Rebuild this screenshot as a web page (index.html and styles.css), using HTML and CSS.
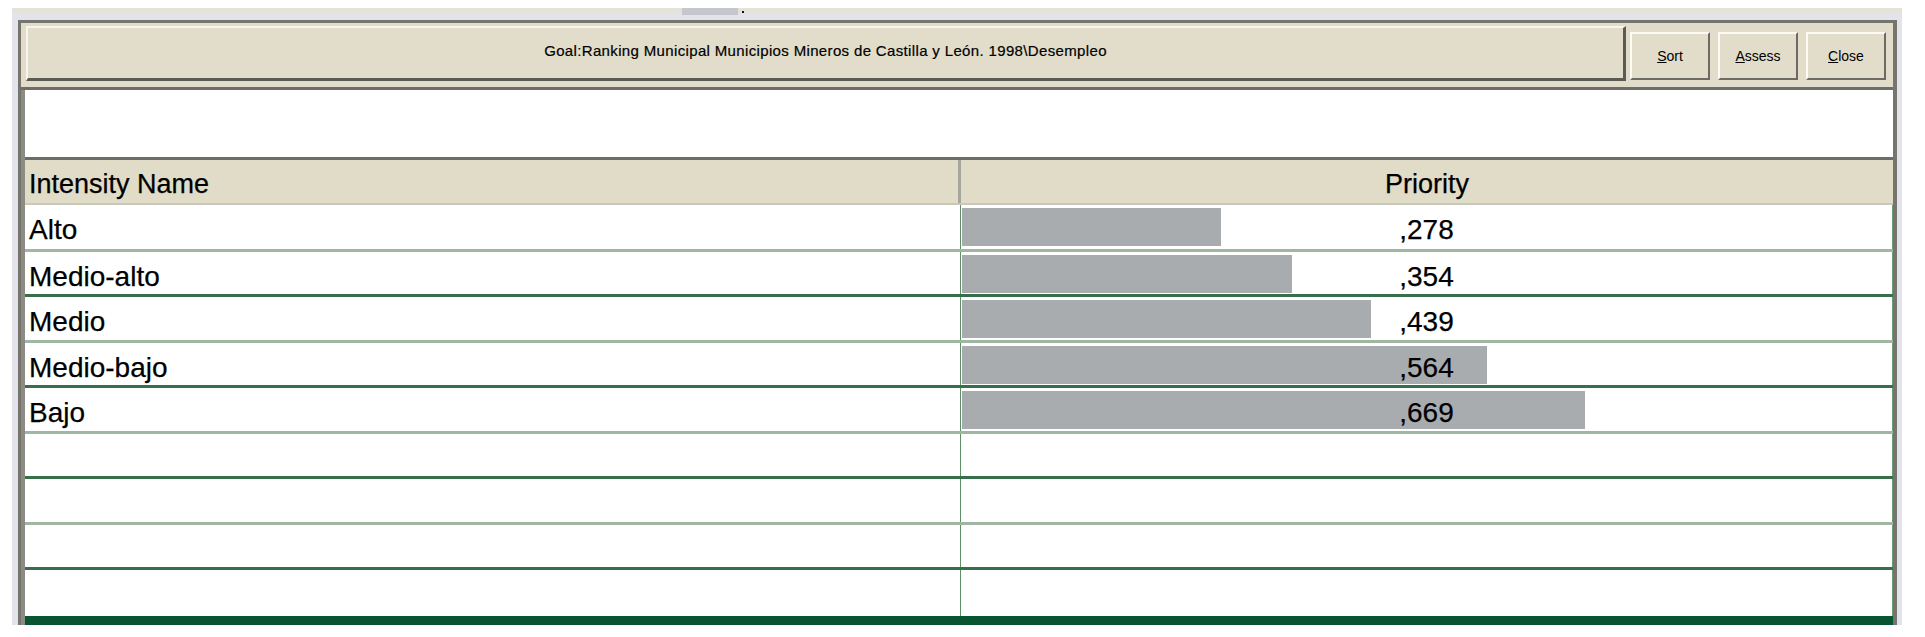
FILE: index.html
```html
<!DOCTYPE html>
<html lang="es">
<head>
    <meta charset="UTF-8">
    <title>Goal:Ranking Municipal</title>
    <link rel="stylesheet" href="styles.css">
</head>
<body>
    <div class="page">
        <div class="topline">
            <span class="tab"></span>
            <span class="dot"></span>
        </div>

        <div class="window">
            <div class="frame">
                <!-- toolbar with title panel and the three buttons -->
                <div class="toolbar">
                    <div class="title">Goal:Ranking Municipal Municipios Mineros de Castilla y León. 1998\Desempleo</div>
                    <div class="buttons">
                        <button><u>S</u>ort</button>
                        <button><u>A</u>ssess</button>
                        <button><u>C</u>lose</button>
                    </div>
                </div>

                <div class="blank"></div>

                <!-- intensities grid -->
                <div class="grid">
                    <div class="row head">
                        <div class="cell name">Intensity Name</div>
                        <div class="cell prio">Priority</div>
                    </div>
                    <div class="row first">
                        <div class="cell name">Alto</div>
                        <div class="cell prio"><span class="bar" style="width: 27.8%"></span><span class="val">,278</span></div>
                    </div>
                    <div class="row">
                        <div class="cell name">Medio-alto</div>
                        <div class="cell prio"><span class="bar" style="width: 35.4%"></span><span class="val">,354</span></div>
                    </div>
                    <div class="row">
                        <div class="cell name">Medio</div>
                        <div class="cell prio"><span class="bar" style="width: 43.9%"></span><span class="val">,439</span></div>
                    </div>
                    <div class="row">
                        <div class="cell name">Medio-bajo</div>
                        <div class="cell prio"><span class="bar" style="width: 56.4%"></span><span class="val">,564</span></div>
                    </div>
                    <div class="row">
                        <div class="cell name">Bajo</div>
                        <div class="cell prio"><span class="bar" style="width: 66.9%"></span><span class="val">,669</span></div>
                    </div>
                    <div class="row">
                        <div class="cell name"></div>
                        <div class="cell prio"></div>
                    </div>
                    <div class="row">
                        <div class="cell name"></div>
                        <div class="cell prio"></div>
                    </div>
                    <div class="row">
                        <div class="cell name"></div>
                        <div class="cell prio"></div>
                    </div>
                    <div class="row last">
                        <div class="cell name"></div>
                        <div class="cell prio"></div>
                    </div>
                </div>
            </div>
        </div>
    </div>
</body>
</html>
```

FILE: styles.css
```css
body {
    margin: 0;
    background: #fff;
    font-family: "Liberation Sans", Arial, sans-serif;
    color: #000;
}
.page {
    padding: 8px 23px 0 12px;
}

/* thin strip above the window */
.topline {
    height: 5px;
    background: #e5e3d9;
    position: relative;
}
.topline .tab {
    position: absolute;
    left: 670px;
    top: 0;
    width: 56px;
    height: 7px;
    background: #c6c6cf;
}
.topline .dot {
    position: absolute;
    left: 730px;
    top: 3px;
    width: 2px;
    height: 2px;
    background: #111;
}

.window {
    border: solid #e3e3ec;
    border-width: 7px 5px 0 6px;
}
.frame {
    border: solid #75756e;
    border-width: 3px 4px 0 3px;
    background: #fff;
}

/* Toolbar */
.toolbar {
    display: flex;
    align-items: flex-start;
    box-sizing: border-box;
    height: 67px;
    padding: 3px 7px 0 5px;
    background: #e1ddca;
    border-bottom: 3px solid #6e6e67;
}
.title {
    flex: 1;
    box-sizing: border-box;
    height: 55px;
    display: flex;
    align-items: center;
    justify-content: center;
    padding-bottom: 6px;
    border-top: 2px solid #f7f5ec;
    border-left: 2px solid #f7f5ec;
    border-right: 3px solid #5b5b55;
    border-bottom: 3px solid #5b5b55;
    font-size: 15px;
    letter-spacing: 0.35px;
    -webkit-text-stroke: 0.2px #000;
}
.buttons {
    display: flex;
    gap: 8px;
    margin: 6px 0 0 4px;
}
.buttons button {
    width: 80px;
    height: 48px;
    padding: 0;
    background: #e1ddca;
    border: 2px solid;
    border-color: #fbfaf3 #6b6a63 #6b6a63 #fbfaf3;
    font-family: "Liberation Sans", Arial, sans-serif;
    font-size: 14px;
    color: #000;
}

.blank {
    height: 67px;
    border-left: 4px solid #8c8c84;
}

/* Grid */
.grid {
    border-left: 4px solid #8c8c84;
}
.row {
    display: grid;
    grid-template-columns: 936px 1fr;
    box-sizing: border-box;
    height: 46px;
}
.row:nth-child(even) { border-bottom: 3px solid #9fb7a0; }
.row:nth-child(odd) { border-bottom: 3px solid #376f4b; }
.row:nth-child(odd):not(.head) { height: 45px; }
.row.first { height: 47px; }
.row.last { height: 55px; border-bottom: 9px solid #0a5531; }

.row.head {
    height: 48px;
    border-top: 3px solid #6d6d66;
    border-bottom: 2px solid #cac8bb;
    background: #e0dcc8;
}

.cell {
    box-sizing: border-box;
    font-size: 28px;
    line-height: 34px;
    padding-top: 8px;
    white-space: nowrap;
    -webkit-text-stroke: 0.25px #000;
}
.cell.name {
    padding-left: 4px;
    border-right: 1px solid #5e9068;
}
.cell.prio {
    position: relative;
    text-align: center;
    border-right: 1px solid #6d9c74;
}
.head .cell {
    font-size: 27px;
    padding-top: 7px;
}
.head .cell.name { border-right: 3px solid #a7a69d; }
.head .cell.prio { border-right: none; }

.bar {
    position: absolute;
    left: 1px;
    top: 3px;
    height: 38px;
    background: #a9acaf;
}
.val {
    position: relative;
}
```
